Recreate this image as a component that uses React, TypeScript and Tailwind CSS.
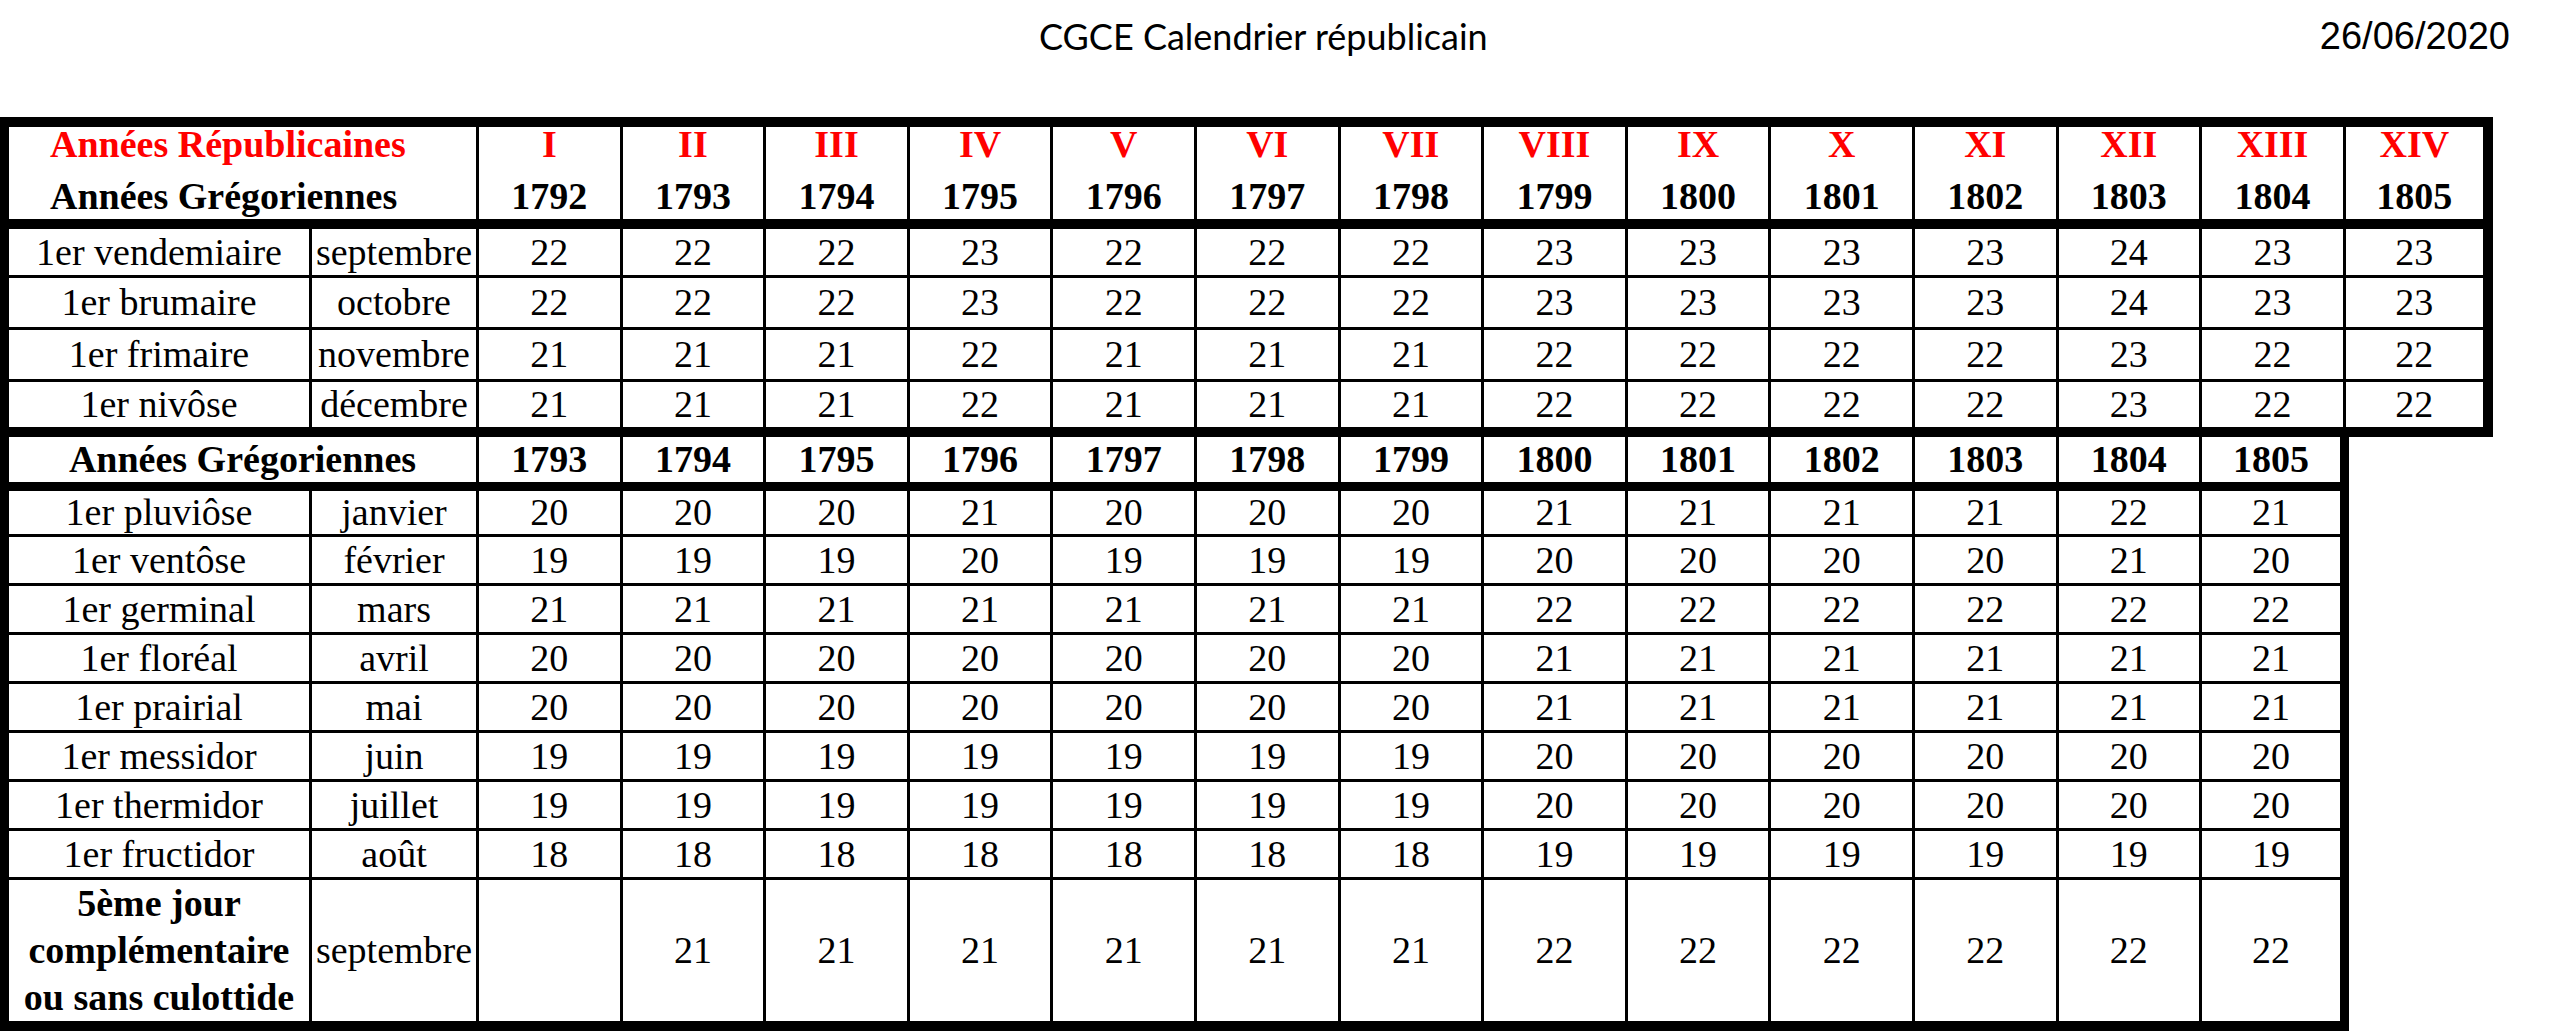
import React from 'react'

const romans = ['I', 'II', 'III', 'IV', 'V', 'VI', 'VII', 'VIII', 'IX', 'X', 'XI', 'XII', 'XIII', 'XIV']
const topYears = [1792, 1793, 1794, 1795, 1796, 1797, 1798, 1799, 1800, 1801, 1802, 1803, 1804, 1805]
const lowYears = [1793, 1794, 1795, 1796, 1797, 1798, 1799, 1800, 1801, 1802, 1803, 1804, 1805]

const topRows = [
  { label: '1er vendemiaire', month: 'septembre', vals: [22, 22, 22, 23, 22, 22, 22, 23, 23, 23, 23, 24, 23, 23] },
  { label: '1er brumaire', month: 'octobre', vals: [22, 22, 22, 23, 22, 22, 22, 23, 23, 23, 23, 24, 23, 23] },
  { label: '1er frimaire', month: 'novembre', vals: [21, 21, 21, 22, 21, 21, 21, 22, 22, 22, 22, 23, 22, 22] },
  { label: '1er nivôse', month: 'décembre', vals: [21, 21, 21, 22, 21, 21, 21, 22, 22, 22, 22, 23, 22, 22] },
]

const lowRows = [
  { label: '1er pluviôse', month: 'janvier', vals: [20, 20, 20, 21, 20, 20, 20, 21, 21, 21, 21, 22, 21] },
  { label: '1er ventôse', month: 'février', vals: [19, 19, 19, 20, 19, 19, 19, 20, 20, 20, 20, 21, 20] },
  { label: '1er germinal', month: 'mars', vals: [21, 21, 21, 21, 21, 21, 21, 22, 22, 22, 22, 22, 22] },
  { label: '1er floréal', month: 'avril', vals: [20, 20, 20, 20, 20, 20, 20, 21, 21, 21, 21, 21, 21] },
  { label: '1er prairial', month: 'mai', vals: [20, 20, 20, 20, 20, 20, 20, 21, 21, 21, 21, 21, 21] },
  { label: '1er messidor', month: 'juin', vals: [19, 19, 19, 19, 19, 19, 19, 20, 20, 20, 20, 20, 20] },
  { label: '1er thermidor', month: 'juillet', vals: [19, 19, 19, 19, 19, 19, 19, 20, 20, 20, 20, 20, 20] },
  { label: '1er fructidor', month: 'août', vals: [18, 18, 18, 18, 18, 18, 18, 19, 19, 19, 19, 19, 19] },
]

const lastVals = ['', '21', '21', '21', '21', '21', '21', '22', '22', '22', '22', '22', '22']

export default function App() {
  return (
    <div className="w-[2560px] h-[1032px] bg-white overflow-hidden text-black">
      {/* page header */}
      <header className="h-[117px] flex items-start justify-between pt-[14px]">
        <h1 className="ml-[1039px] font-['Lato',sans-serif] text-[36px] leading-[44px] font-normal">
          CGCE Calendrier républicain
        </h1>
        <div className="mr-[50px] font-['Liberation_Sans',sans-serif] text-[38px] leading-[44px]">26/06/2020</div>
      </header>

      <table className="border-collapse table-fixed w-[2493px] font-['Liberation_Serif',serif] text-[38px] leading-none">
        <colgroup>
          <col className="w-[306px]" />
          <col className="w-[167px]" />
          {romans.map((r) => (
            <col key={r} className="w-[143.6px]" />
          ))}
        </colgroup>
        <tbody>
          {/* republican / gregorian years header */}
          <tr className="h-[102px]">
            <td
              colSpan={2}
              className="border-black border-t-[10px] border-b-[10px] border-l-[9px] border-r-[3px] p-0 pl-[41px] text-left align-middle font-bold"
            >
              <div className="leading-[46px] -mt-[6px] mb-[6px] text-[#ff0000]">Années Républicaines</div>
              <div className="leading-[46px]">Années Grégoriennes</div>
            </td>
            {romans.map((r, i) => (
              <td
                key={r}
                className={`border-black border-t-[10px] border-b-[10px] border-l-[3px] ${
                  i === 13 ? 'border-r-[10px]' : 'border-r-[3px]'
                } p-0 text-center align-middle font-bold`}
              >
                <div className="leading-[46px] -mt-[6px] mb-[6px] text-[#ff0000]">{r}</div>
                <div className="leading-[46px]">{topYears[i]}</div>
              </td>
            ))}
          </tr>

          {topRows.map((row, r) => (
            <tr key={row.label} className="h-[52px]">
              <td
                className={`border-black border-l-[9px] border-r-[3px] ${r === 0 ? 'border-t-[10px]' : 'border-t-[3px]'} ${
                  r === 3 ? 'border-b-[10px]' : 'border-b-[3px]'
                } p-0 text-center align-middle`}
              >
                {row.label}
              </td>
              <td
                className={`border-black border-x-[3px] ${r === 0 ? 'border-t-[10px]' : 'border-t-[3px]'} ${
                  r === 3 ? 'border-b-[10px]' : 'border-b-[3px]'
                } p-0 text-center align-middle`}
              >
                {row.month}
              </td>
              {row.vals.map((v, i) => (
                <td
                  key={i}
                  className={`border-black border-l-[3px] ${i === 13 ? 'border-r-[10px]' : 'border-r-[3px]'} ${
                    r === 0 ? 'border-t-[10px]' : 'border-t-[3px]'
                  } ${r === 3 ? 'border-b-[10px]' : 'border-b-[3px]'} p-0 text-center align-middle`}
                >
                  {v}
                </td>
              ))}
            </tr>
          ))}

          {/* gregorian years of the second half */}
          <tr className="h-[54px]">
            <td
              colSpan={2}
              className="border-black border-t-[10px] border-b-[9px] border-l-[9px] border-r-[3px] p-0 text-center align-middle font-bold"
            >
              Années Grégoriennes
            </td>
            {lowYears.map((y, i) => (
              <td
                key={y}
                className={`border-black border-t-[10px] border-b-[9px] border-l-[3px] ${
                  i === 12 ? 'border-r-[9px]' : 'border-r-[3px]'
                } p-0 text-center align-middle font-bold`}
              >
                {y}
              </td>
            ))}
            <td className="border-0 p-0" />
          </tr>

          {lowRows.map((row, r) => (
            <tr key={row.label} className="h-[49px]">
              <td
                className={`border-black border-l-[9px] border-r-[3px] border-b-[3px] ${
                  r === 0 ? 'border-t-[9px]' : 'border-t-[3px]'
                } p-0 text-center align-middle`}
              >
                {row.label}
              </td>
              <td
                className={`border-black border-x-[3px] border-b-[3px] ${r === 0 ? 'border-t-[9px]' : 'border-t-[3px]'} p-0 text-center align-middle`}
              >
                {row.month}
              </td>
              {row.vals.map((v, i) => (
                <td
                  key={i}
                  className={`border-black border-l-[3px] border-b-[3px] ${i === 12 ? 'border-r-[9px]' : 'border-r-[3px]'} ${
                    r === 0 ? 'border-t-[9px]' : 'border-t-[3px]'
                  } p-0 text-center align-middle`}
                >
                  {v}
                </td>
              ))}
              <td className="border-0 p-0" />
            </tr>
          ))}

          {/* sans-culottides */}
          <tr className="h-[147px]">
            <td className="border-black border-l-[9px] border-r-[3px] border-t-[3px] border-b-[10px] p-0 text-center align-middle font-bold">
              <div className="leading-[47px]">5ème jour</div>
              <div className="leading-[47px]">complémentaire</div>
              <div className="leading-[47px]">ou sans culottide</div>
            </td>
            <td className="border-black border-x-[3px] border-t-[3px] border-b-[10px] p-0 text-center align-middle">
              septembre
            </td>
            {lastVals.map((v, i) => (
              <td
                key={i}
                className={`border-black border-l-[3px] border-t-[3px] border-b-[10px] ${
                  i === 12 ? 'border-r-[9px]' : 'border-r-[3px]'
                } p-0 text-center align-middle`}
              >
                {v}
              </td>
            ))}
            <td className="border-0 p-0" />
          </tr>
        </tbody>
      </table>
    </div>
  )
}
